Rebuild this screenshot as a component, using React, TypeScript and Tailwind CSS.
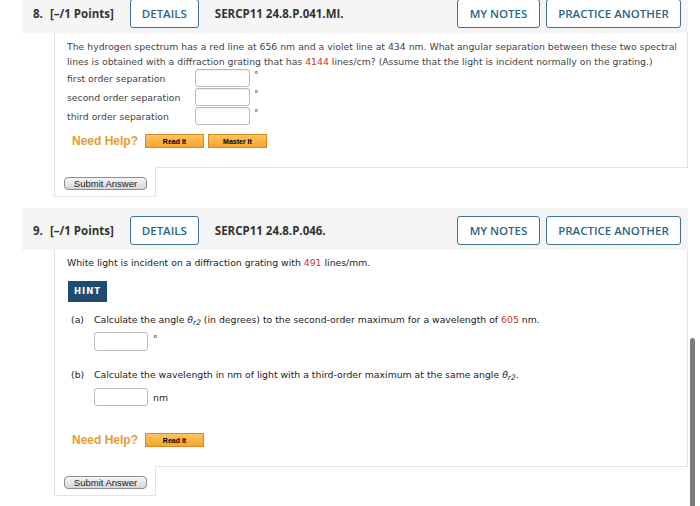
import React from 'react';

const body = { fontFamily: '"DejaVu Sans", Verdana, sans-serif' };
const head = { fontFamily: '"Open Sans", "Liberation Sans", sans-serif' };
const arial = { fontFamily: '"Liberation Sans", Arial, sans-serif' };

function Header({ num, code }: { num: string; code: string }) {
  return (
    <div
      className="ml-[22px] w-[666px] h-[42px] bg-[#f5f5f5] flex items-start pt-[8px] pl-[11px] pr-[7px]"
      style={head}
    >
      <div className="h-[29px] flex items-center text-[11.5px] font-bold text-[#333]">
        <span className="w-[17px]">{num}</span>
        <span>[–/1 Points]</span>
      </div>
      <button className="ml-[16px] w-[69px] h-[29px] border border-[#3d7391] rounded-[3px] bg-white text-[11.5px] font-semibold text-[#2b6585]">
        DETAILS
      </button>
      <div className="ml-[16px] h-[29px] flex items-center text-[11.5px] font-bold text-[#333]">{code}</div>
      <button className="ml-auto w-[83px] h-[29px] border border-[#3d7391] rounded-[3px] bg-white text-[11.5px] font-semibold text-[#2b6585]">
        MY NOTES
      </button>
      <button className="ml-[6px] w-[135px] h-[29px] border border-[#3d7391] rounded-[3px] bg-white text-[11.5px] font-semibold text-[#2b6585]">
        PRACTICE ANOTHER
      </button>
    </div>
  );
}

function HelpBtn({ label }: { label: string }) {
  return (
    <button
      className="block w-[59px] h-[14px] border border-[#d88a1f] bg-gradient-to-b from-[#fcc45f] to-[#f5a52b] text-[7px] font-bold text-black leading-none"
      style={arial}
    >
      {label}
    </button>
  );
}

function NeedHelp({ buttons, className }: { buttons: string[]; className: string }) {
  return (
    <div className={`flex items-center h-[14px] ${className}`}>
      <span className="ml-[5px] text-[12px] font-bold text-[#e99a34]" style={arial}>
        Need Help?
      </span>
      <div className="ml-[7px] flex gap-[4px]">
        {buttons.map((b) => (
          <HelpBtn key={b} label={b} />
        ))}
      </div>
    </div>
  );
}

function SubmitTab() {
  return (
    <div className="-mt-px ml-[54px] w-[102px] h-[30px] bg-white border-x border-b border-[#e3e3e3] pt-[10px] pl-[9px]">
      <button
        className="block w-[83px] h-[13px] rounded-[4px] border border-[#8c8c8c] bg-gradient-to-b from-[#f6f6f6] to-[#d6d6d6] text-[9.5px] text-[#222] leading-none"
        style={arial}
      >
        Submit Answer
      </button>
    </div>
  );
}

function Input() {
  return <div className="w-[55px] h-[18px] border border-[#b9b9b9] rounded-[3px] bg-white shadow-[inset_0_1px_1px_rgba(0,0,0,0.06)]" />;
}

function Theta() {
  return (
    <span className="italic">
      θ<sub className="text-[7.5px] relative top-[2px]">r2</sub>
    </span>
  );
}

export default function App() {
  const rows = ['first order separation', 'second order separation', 'third order separation'];
  return (
    <div className="relative w-[700px] h-[506px] overflow-hidden bg-white">
      {/* question 8 */}
      <div className="-mt-[9px]">
        <Header num="8." code="SERCP11 24.8.P.041.MI." />
        <div className="ml-[54px] w-[634px] border-x border-b border-[#e3e3e3] px-[12px] pt-[6px] pb-[19px] text-[9.3px] leading-[15px] text-[#444]" style={body}>
          <div className="whitespace-nowrap">
            The hydrogen spectrum has a red line at 656 nm and a violet line at 434 nm. What angular separation between these two spectral
          </div>
          <div className="whitespace-nowrap">
            lines is obtained with a diffraction grating that has <span className="text-[#c0392b]">4144</span> lines/cm? (Assume that the light is incident normally on the grating.)
          </div>
          <div className="flex flex-col gap-[1px]">
            {rows.map((r) => (
              <div key={r} className="flex items-center h-[18px]">
                <span className="w-[128px]">{r}</span>
                <Input />
                <span className="self-start ml-[4px] text-[9px] leading-[12px]">°</span>
              </div>
            ))}
          </div>
          <NeedHelp buttons={['Read It', 'Master It']} className="mt-[9px]" />
        </div>
        <SubmitTab />
      </div>

      {/* question 9 */}
      <div className="mt-[11px]">
        <Header num="9." code="SERCP11 24.8.P.046." />
        <div className="ml-[54px] w-[634px] border-x border-b border-[#e3e3e3] px-[12px] pt-[5px] pb-[19px] text-[9.3px] leading-[15px] text-[#222]" style={body}>
          <div className="whitespace-nowrap">
            White light is incident on a diffraction grating with <span className="text-[#c0392b]">491</span> lines/mm.
          </div>
          <div
            className="mt-[11px] ml-[1px] w-[39px] h-[21px] bg-[#1f4b70] text-white text-[8.5px] font-bold tracking-[1px] flex items-center justify-center"
            style={body}
          >
            HINT
          </div>
          <div className="mt-[10px] flex whitespace-nowrap">
            <span className="ml-[4px] w-[23px]">(a)</span>
            <span>
              Calculate the angle <Theta /> (in degrees) to the second-order maximum for a wavelength of <span className="text-[#c0392b]">605</span> nm.
            </span>
          </div>
          <div className="mt-[5px] ml-[27px] flex">
            <div className="w-[54px] h-[19px] border border-[#b9b9b9] rounded-[3px] bg-white" />
            <span className="ml-[5px] text-[9px] leading-[14px]">°</span>
          </div>
          <div className="mt-[16px] flex whitespace-nowrap">
            <span className="ml-[4px] w-[23px]">(b)</span>
            <span>
              Calculate the wavelength in nm of light with a third-order maximum at the same angle <Theta />.
            </span>
          </div>
          <div className="mt-[6px] ml-[27px] flex items-center">
            <div className="w-[54px] h-[18px] border border-[#b9b9b9] rounded-[3px] bg-white" />
            <span className="ml-[5px]">nm</span>
          </div>
          <NeedHelp buttons={['Read It']} className="mt-[27px]" />
        </div>
        <SubmitTab />
      </div>

      {/* scrollbar thumb */}
      <div className="absolute left-[690px] top-[338px] w-[5px] h-[200px] rounded-full bg-[#7b7b7b]" />
    </div>
  );
}
